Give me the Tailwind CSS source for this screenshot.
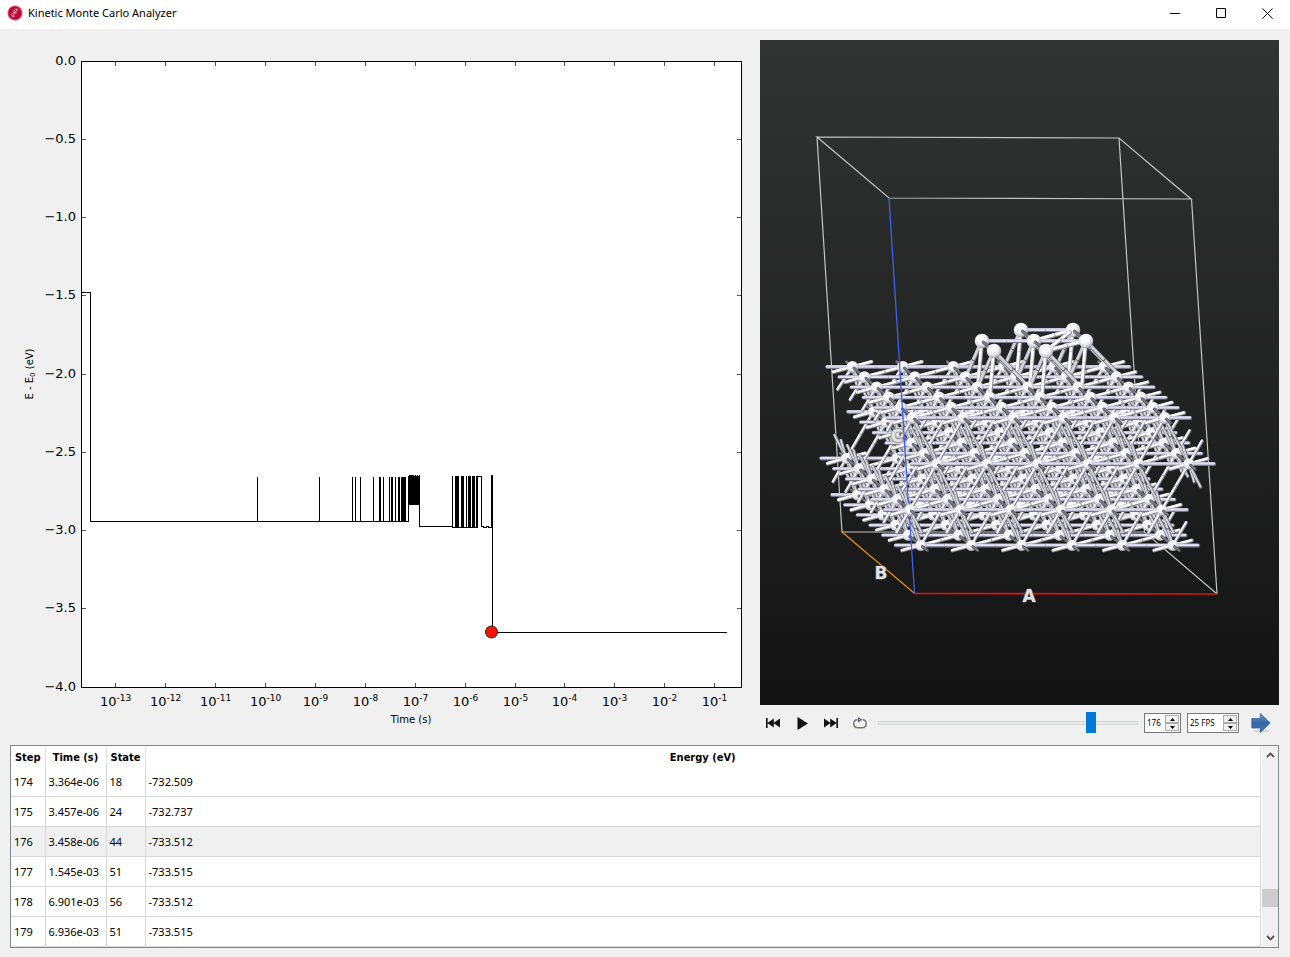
<!DOCTYPE html>
<html lang="en">
<head>
<meta charset="utf-8">
<title>Kinetic Monte Carlo Analyzer</title>
<script src="https://cdn.jsdelivr.net/npm/@tailwindcss/browser@4"></script>
</head>
<body class="flex min-h-screen flex-col bg-[#f0f0f0] font-['Noto_Sans',sans-serif] text-[11px] text-black">
<header class="flex h-[29px] items-center bg-white pb-[3px] pl-[7px]">
  <svg class="size-4" viewBox="0 0 16 16" aria-hidden="true">
    <circle cx="8" cy="8" r="7.7" fill="#e58aa3"/><circle cx="8" cy="8" r="6.8" fill="#bd0a3c"/>
    <path d="M10.8 4.6C9 3.9 7.3 4.6 6.8 6c-.3 1 .2 1.7 1.2 1.8C6 7.8 4.500 8.900 4.600 10.400c.1 1.300 1.900 1.500 3.100.8M8 7.8h1.800M5 12.300l5.800-8.800" fill="none" stroke="#efb3c3" stroke-width=".9"/>
  </svg>
  <h1 class="ml-[5px] flex-1">Kinetic Monte Carlo Analyzer</h1>
  <button class="flex h-[26px] w-[46px] items-center justify-center" aria-label="Minimize"><svg class="size-[11px]" viewBox="0 0 11 11"><path d="M0 5.500h10" stroke="#000" fill="none"/></svg></button>
  <button class="flex h-[26px] w-[46px] items-center justify-center" aria-label="Maximize"><svg class="size-[11px]" viewBox="0 0 11 11"><path d="M.5.5h9v9h-9z" stroke="#000" fill="none"/></svg></button>
  <button class="flex h-[26px] w-[46px] items-center justify-center" aria-label="Close"><svg class="size-[11px]" viewBox="0 0 11 11"><path d="M.5.5l10 10M10.500.5l-10 10" stroke="#000" fill="none"/></svg></button>
</header>

<main class="flex flex-1 flex-col gap-1 pt-[11px] pr-[11px] pb-[9px] pl-[10px]">
  <div class="grid grid-cols-[740fr_519fr] gap-[10px]">
    <svg id="plot" class="w-full font-['DejaVu_Sans',sans-serif]" viewBox="10 40 740 695" role="img" aria-label="Energy over time">
      <rect x="81" y="61" width="661" height="627" fill="#fff"/>
      <g id="ticks" stroke="#555" fill="none" shape-rendering="crispEdges"></g>
      <g stroke="#000" fill="none" shape-rendering="crispEdges">
        <rect x="81.500" y="61.500" width="660" height="626"/>
        <path d="M81.500 292.500h9V521.500H408.500V475.500M419.500 475V526.500H452.500M452 527.500h26M477.500 527V476.500h4V526.500h2v1h3v-1h2v1h3v-1M492.500 475V632.500M491.500 475V527M491.500 632.500H727"/>
      </g>
      <g id="spikes" fill="#000" shape-rendering="crispEdges"></g>
      <circle cx="491.500" cy="632" r="6" fill="#ff1300" stroke="#222"/>
      <g id="labels" class="text-[13px]" fill="#000"></g>
      <text x="411" y="723" text-anchor="middle" class="text-[10px]">Time (s)</text>
      <text transform="translate(33 374) rotate(-90)" text-anchor="middle" class="text-[10px]">E - E<tspan class="text-[7px]" dy="2">0</tspan><tspan dy="-2"> (eV)</tspan></text>
    </svg>

    <div class="flex flex-col">
      <svg class="w-full" viewBox="760 40 519 665" role="img" aria-label="Atomic structure">
        <defs>
          <linearGradient id="sky" x1="0" y1="0" x2="0" y2="1"><stop offset="0" stop-color="#323433"/><stop offset="1" stop-color="#131313"/></linearGradient>
          <radialGradient id="ball" cx=".42" cy=".36" r=".68"><stop offset="0" stop-color="#fff"/><stop offset=".5" stop-color="#f2f2f9"/><stop offset=".8" stop-color="#c6c6d2"/><stop offset="1" stop-color="#7a7a84"/></radialGradient>
        </defs>
        <rect x="760" y="40" width="519" height="665" fill="url(#sky)"/>
        <g fill="none" stroke="#c4c6c4" stroke-width="1.200">
          <path d="M817 137l302 1 72 61-302-1zM817 137l25 395h302.500l72.500 62M1119 138l25.500 394M1191.500 199l25.500 395"/>
          <path d="M842 532l72 61" stroke="#f08c10"/>
          <path d="M914 593.500l303 .5" stroke="#d81414" stroke-width="1.600"/>
        </g>
        <g id="crystal" stroke-linecap="round"></g>
        <g class="font-['DejaVu_Sans',sans-serif] text-[17px] font-bold" fill="#e2e2e2" stroke="#555" stroke-width="1" paint-order="stroke" text-anchor="middle">
          <text x="881" y="579">B</text><text x="1029" y="602">A</text><text x="897" y="442" stroke="#9a9a9a" stroke-width="2">C</text>
        </g>
        <path d="M889 198l19.400 305M909.500 516l5 77" fill="none" stroke="#3d62ee" stroke-width="1.300"/>
      </svg>
      <div class="flex h-9 items-center gap-[3px]">
        <button class="flex h-6 w-[26px] items-center justify-center" aria-label="First step"><svg class="h-[10px] w-[14px]" viewBox="0 0 14 10"><path d="M0 0h1.600v10H0zM7.800.5v9L1.300 5zM14 .5v9L7.300 5z" fill="#111"/></svg></button>
        <button class="flex h-6 w-[26px] items-center justify-center" aria-label="Play"><svg class="h-[13px] w-[11px]" viewBox="0 0 11 13"><path d="M.5 0L11 6.500.5 13z" fill="#111"/></svg></button>
        <button class="flex h-6 w-[26px] items-center justify-center" aria-label="Last step"><svg class="h-[10px] w-[14px]" viewBox="0 0 14 10"><path d="M14 0h-1.600v10H14zM6.200.5v9L12.700 5zM0 .5v9L6.700 5z" fill="#111"/></svg></button>
        <button class="flex h-6 w-[26px] items-center justify-center" aria-label="Loop"><svg class="h-[12px] w-[14px]" viewBox="0 0 14 12"><path d="M4.500 2.700C2 2.700.8 4.300.8 6.700s1.500 4 4 4h4.400c2.500 0 4-1.600 4-4s-1.200-4-3.700-4" fill="none" stroke="#777" stroke-width="1.500"/><path d="M5 0l4.200 2.700L5 5.400z" fill="#4b5470"/><path d="M6 2l1.200.7L6 3.500z" fill="#e8ecf4"/></svg></button>
        <input type="range" min="0" max="1000" value="836" aria-label="Frame" class="ml-[2px] mr-[3px] h-[21px] min-w-0 flex-1 appearance-none bg-transparent [&::-webkit-slider-runnable-track]:h-1 [&::-webkit-slider-runnable-track]:border [&::-webkit-slider-runnable-track]:border-[#d3d7d6] [&::-webkit-slider-runnable-track]:bg-[#e7eaea] [&::-webkit-slider-thumb]:-mt-[10px] [&::-webkit-slider-thumb]:h-[21px] [&::-webkit-slider-thumb]:w-[10px] [&::-webkit-slider-thumb]:appearance-none [&::-webkit-slider-thumb]:bg-[#0078d7]">
        <div class="mr-[3px] flex h-[20px] w-[37px] border border-[#7a7a7a] bg-white p-px">
          <input type="text" value="176" aria-label="Step number" class="w-0 min-w-0 flex-1 pl-px text-[8px]">
          <div class="flex w-[14px] flex-col">
            <button class="flex flex-1 items-center justify-center border border-[#adadad] bg-[#f0f0f0]" aria-label="Next step"><svg class="h-[3px] w-[5px]" viewBox="0 0 5 3"><path d="M0 3h5L2.500 0z"/></svg></button>
            <button class="flex flex-1 items-center justify-center border border-[#adadad] bg-[#f0f0f0]" aria-label="Previous step"><svg class="h-[3px] w-[5px]" viewBox="0 0 5 3"><path d="M0 0h5L2.500 3z"/></svg></button>
          </div>
        </div>
        <div class="flex h-[20px] w-[52px] border border-[#7a7a7a] bg-white p-px">
          <input type="text" value="25 FPS" aria-label="Frame rate" class="w-0 min-w-0 flex-1 pl-px text-[8px]">
          <div class="flex w-[14px] flex-col">
            <button class="flex flex-1 items-center justify-center border border-[#adadad] bg-[#f0f0f0]" aria-label="Faster"><svg class="h-[3px] w-[5px]" viewBox="0 0 5 3"><path d="M0 3h5L2.500 0z"/></svg></button>
            <button class="flex flex-1 items-center justify-center border border-[#adadad] bg-[#f0f0f0]" aria-label="Slower"><svg class="h-[3px] w-[5px]" viewBox="0 0 5 3"><path d="M0 0h5L2.500 3z"/></svg></button>
          </div>
        </div>
        <button class="mr-1 ml-1 flex h-6 w-[29px] items-center justify-center" aria-label="Export frame">
          <svg class="h-[20px] w-[20px]" viewBox="0 0 20 20"><defs><linearGradient id="arrow" x1="0" y1="0" x2="0" y2="1"><stop offset="0" stop-color="#6c97c8"/><stop offset=".5" stop-color="#3468a8"/><stop offset="1" stop-color="#3f71b0"/></linearGradient></defs><ellipse cx="10" cy="18" rx="8" ry="1.500" fill="#d4d4d4"/><path d="M.8 5.500h8.500v-5L19.200 10 9.300 19.500v-4.500H.8z" fill="url(#arrow)" stroke="#2d5c98" stroke-width=".7"/></svg>
        </button>
      </div>
    </div>
  </div>

  <div class="flex border border-[#828790] bg-white">
    <table class="flex-1 table-fixed border-collapse text-left">
      <colgroup><col class="w-[34px]"><col class="w-[61px]"><col class="w-[39px]"><col></colgroup>
      <thead class="font-['DejaVu_Sans_Condensed','DejaVu_Sans',sans-serif] [&_th]:border-r [&_th]:border-[#e4e4e4] [&_th]:p-0 [&_th]:pt-1 [&_th]:text-center [&_th]:leading-4 [&_th]:font-bold">
        <tr class="h-[20px]">
          <th scope="col">Step</th><th scope="col">Time (s)</th><th scope="col">State</th><th scope="col">Energy (eV)</th>
        </tr>
      </thead>
      <tbody class="[&_td]:border-r [&_td]:border-b [&_td]:border-[#d8d8d8] [&_td]:p-0 [&_td]:pt-[2px] [&_td]:pl-[3px] [&_tr]:h-[30px]">
        <tr><td>174</td><td>3.364e-06</td><td>18</td><td>-732.509</td></tr>
        <tr><td>175</td><td>3.457e-06</td><td>24</td><td>-732.737</td></tr>
        <tr class="bg-[#f0f0f0]"><td>176</td><td>3.458e-06</td><td>44</td><td>-733.512</td></tr>
        <tr><td>177</td><td>1.545e-03</td><td>51</td><td>-733.515</td></tr>
        <tr><td>178</td><td>6.901e-03</td><td>56</td><td>-733.512</td></tr>
        <tr><td>179</td><td>6.936e-03</td><td>51</td><td>-733.515</td></tr>
      </tbody>
    </table>
    <div class="ml-px flex w-4 flex-col bg-[#f0f0f0]">
      <button class="flex h-[17px] items-center justify-center" aria-label="Scroll up"><svg class="h-[6px] w-[9px]" viewBox="0 0 9 6"><path d="M1 5l3.500-3.500L8 5" fill="none" stroke="#505050" stroke-width="1.800"/></svg></button>
      <div class="flex-[126]"></div>
      <div class="h-[18px] bg-[#cdcdcd]"></div>
      <div class="flex-[23]"></div>
      <button class="flex h-[17px] items-center justify-center" aria-label="Scroll down"><svg class="h-[6px] w-[9px]" viewBox="0 0 9 6"><path d="M1 1l3.500 3.500L8 1" fill="none" stroke="#505050" stroke-width="1.800"/></svg></button>
    </div>
  </div>
</main>

<script>
// Axis ticks and labels
const ticks = [], labels = [];
for (let k = 0; k <= 8; k++) {
  const y = 61.5 + Math.floor(k * 78.25);
  if (k && k < 8) ticks.push(`<path d="M82 ${y}h4M741 ${y}h-4"/>`);
  labels.push(`<text x="76" y="${y + 3}" text-anchor="end">${k ? '−' : ''}${(k / 2).toFixed(1)}</text>`);
}
for (let k = 0; k < 13; k++) {
  const x = 115.5 + 50 * k - (k > 8 ? 1 : 0), e = 13 - k;
  ticks.push(`<path d="M${x} 62v4M${x} 687v-4"/>`);
  labels.push(`<text x="${x}" y="706" text-anchor="middle">10<tspan class="text-[9px]" dy="-5">-${e}</tspan></text>`);
}
document.getElementById('ticks').innerHTML = ticks.join('');
document.getElementById('labels').innerHTML = labels.join('');

// Rapid transitions: [x, width, top, bottom]
const early = [[257,1],[319,1],[352,1],[355,1],[360,1],[373,1],[379,2],[383,1],[389,1],[391,2],[395,1],[398,2],[401,5]].map(([x, w]) => [x, w, 477, 522]);
const late = [[452,1],[455,4],[461,3],[466,1],[468,3],[472,3],[476,2]].map(([x, w]) => [x, w, 476, 528]);
document.getElementById('spikes').innerHTML = [...early, [408,11,476,505], [409,5,475,477], [415,1,475,477], [417,1,475,477], ...late]
  .map(([x, w, a, b]) => `<rect x="${x}" y="${a}" width="${w}" height="${b - a}"/>`).join('');

// Four close-packed layers, 6 x 6 sites each, with an island of seven adatoms
const layers = [
  { x: 913, y: 418, bx: -12.1, by: -10.2, q: 0 },
  { x: 937, y: 464, bx: -12.7, by: -10.4, q: -1 / 3 },
  { x: 910, y: 510, bx: -12.7, by: -10.3, q: -2 / 3 },
  { x: 921, y: 545.5, bx: -12.7, by: -10.1, q: 0 },
];
const site = (l, i, j) => { const L = layers[l]; return { x: L.x + 50.4 * i + L.bx * j, y: L.y + L.by * j, z: -42 * (j + L.q) - 10 * l }; };
// Sites of the layer above that touch site (0, 0) of layer l
const above = [[], [[0, 0], [1, 0], [0, -1]], [[-1, 0], [0, 0], [-1, -1]], [[0, 1], [1, 1], [0, 0]]];
const plane = [[1, 0], [-1, 0], [0, 1], [0, -1], [1, 1], [-1, -1]];
const items = [];
const tones = { row: ['#dedef0', '#77778a'], diag: ['#fbfbff', '#8d8d98'], depth: ['#7c7c86', '#55555d'], steep: ['#d2d2dc', '#66666f'], light: ['#f2f2fb', '#84848f'] };
function bond(p, q, tone, w) {
  // A bond that comes towards the viewer starts on the near surface of its atom
  const f = q.z > p.z + 8 ? .12 : 0;
  const s = { x: p.x + (q.x - p.x) * f, y: p.y + (q.y - p.y) * f };
  const m = { x: (p.x + q.x) / 2, y: (p.y + q.y) / 2 };
  const [hi, lo] = tones[tone];
  const line = (c, sw, o) => `<path d="M${(s.x + o).toFixed(1)} ${(s.y + o).toFixed(1)}L${(m.x + o).toFixed(1)} ${(m.y + o).toFixed(1)}" stroke="${c}" stroke-width="${sw}"/>`;
  const lift = tone === 'depth' && q.z > p.z ? 4 : 0;
  items.push([p.z * .75 + q.z * .25 + lift, line(lo, w, 0) + line(hi, w - 1.3, -.4)]);
}
function ball(p, r) { items.push([p.z + 13, `<circle cx="${p.x}" cy="${p.y}" r="${r}" fill="url(#ball)"/>`]); }
for (let l = 0; l < 4; l++) for (let i = 0; i < 6; i++) for (let j = 0; j < 6; j++) {
  const p = site(l, i, j);
  ball(p, l ? 5.6 : 6);
  for (const [di, dj] of plane) bond(p, site(l, i + di, j + dj), dj === 0 ? 'row' : di === 0 ? 'depth' : 'diag', di === 0 ? 3 : 3.8);
  for (const [di, dj] of above[l]) { const q = site(l - 1, i + di, j + dj); bond(p, q, q.x > p.x ? 'light' : 'steep', 3.4); }
  if (l < 3) for (const [di, dj] of above[l + 1]) { const q = site(l + 1, i - di, j - dj); bond(p, q, q.x < p.x ? 'light' : 'steep', 3.4); }
}
const island = [[1021, 330, 5], [1073, 330, 5], [982, 341, 4], [1034, 341, 4], [1086, 341, 4], [994, 351, 3], [1046, 351, 3]]
  .map(([x, y, j]) => ({ x, y, z: -42 * j + 24 }));
for (const p of island) {
  ball(p, 7.3);
  for (const q of island) {
    if (p === q || Math.hypot(p.x - q.x, p.y - q.y) > 54) continue;
    const dy = q.y - p.y, dx = q.x - p.x;
    if (Math.abs(dx) < 20) bond(p, q, 'depth', 3.4);
    else if (dy === 0 && p.y < 350) bond(p, q, 'row', 4);
    else if (dy * dx < 0 && Math.min(p.x, q.x) > 1030) bond(p, q, 'diag', 4.4);
  }
  for (const [dx, dy, dz, t] of [[-16, 36, -24, 'steep'], [35, 36, -24, 'steep'], [-4, 46, 18, 'diag']]) {
    const q = { x: p.x + dx, y: p.y + dy, z: p.z + dz };
    bond(p, q, t, 4.2); bond(q, p, t, 4.2);
  }
}
items.sort((a, b) => a[0] - b[0]);
document.getElementById('crystal').innerHTML = items.map(d => d[1]).join('');
</script>
</body>
</html>
